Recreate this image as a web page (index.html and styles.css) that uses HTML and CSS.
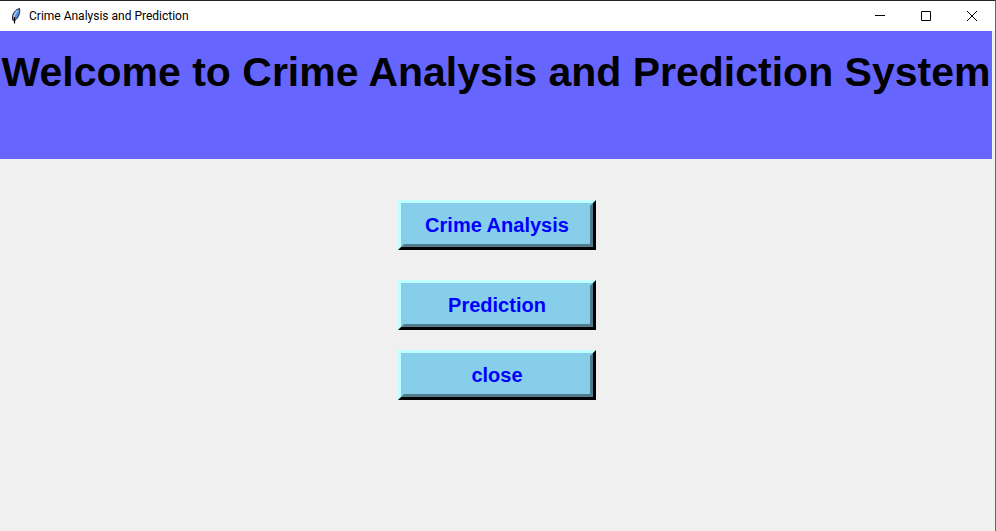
FILE: index.html
```html
<!DOCTYPE html>
<html lang="en">
<head>
<meta charset="utf-8">
<title>Crime Analysis and Prediction</title>
<link rel="stylesheet" href="styles.css">
</head>
<body>
<div class="window">
  <header class="titlebar">
    <svg class="feather" width="12" height="18" viewBox="0 0 12 18" aria-hidden="true">
      <path d="M9.500 1.500 C6 2.500 2.500 6 2.500 10 L2.500 13 L5 13.500 C8.500 10.500 10.500 6 9.500 1.500 Z" fill="#4a8be0" stroke="#20242c" stroke-width="1"/>
      <path d="M8 3.500 C5.500 5.500 4 8 4 11" fill="none" stroke="#a8d0fa" stroke-width="1.500"/>
      <path d="M4.500 10 L4.500 16.500" fill="none" stroke="#000" stroke-width="1.200"/>
    </svg>
    <span class="caption">Crime Analysis and Prediction</span>
    <div class="controls">
      <button class="control" type="button" aria-label="Minimize"><svg width="10" height="10" viewBox="0 0 10 10"><path d="M0 4.500H10" stroke="#000" fill="none"/></svg></button>
      <button class="control" type="button" aria-label="Maximize"><svg width="10" height="10" viewBox="0 0 10 10"><path d="M.5 .5H9.500V9.500H.5Z" stroke="#000" fill="none"/></svg></button>
      <button class="control" type="button" aria-label="Close"><svg width="10" height="10" viewBox="0 0 10 10"><path d="M0 0L10 10M10 0L0 10" stroke="#000" fill="none"/></svg></button>
    </div>
  </header>
  <main class="content">
    <h1 class="banner">Welcome to Crime Analysis and Prediction System</h1>
    <div class="actions">
      <button class="action action-first" type="button"><span class="face">Crime Analysis</span></button>
      <button class="action" type="button"><span class="face">Prediction</span></button>
      <button class="action" type="button"><span class="face">close</span></button>
    </div>
  </main>
</div>
</body>
</html>
```

FILE: styles.css
```css
* {
  box-sizing: border-box;
}

body {
  margin: 0;
  background: #f0f0f0;
  font-family: "Liberation Sans", Arial, sans-serif;
}

.window {
  min-height: 100vh;
  border-top: 1px solid #252525;
  border-right: 1px solid #666;
}

.titlebar {
  display: flex;
  align-items: center;
  height: 30px;
  padding-left: 10px;
  background: #fff;
}

.feather {
  flex: none;
  margin-right: 7px;
}

.caption {
  flex: 1;
  color: #000;
  font: 12px Roboto, "Open Sans", sans-serif;
  white-space: nowrap;
}

.controls {
  display: flex;
  height: 100%;
}

.control {
  display: flex;
  align-items: center;
  justify-content: center;
  width: 46px;
  padding: 0;
  border: 0;
  background: transparent;
}

.content {
  padding-right: 3px;
}

.banner {
  height: 128px;
  margin: 0;
  padding-top: 17px;
  background: #6666ff;
  color: #000;
  font-size: 41px;
  font-weight: bold;
  line-height: 48px;
  text-align: center;
  white-space: nowrap;
}

.actions {
  display: flex;
  flex-direction: column;
  align-items: center;
  gap: 20px;
  padding: 41px 0 20px 2px;
}

.action {
  display: flex;
  width: 198px;
  height: 50px;
  padding: 0;
  border: 3px solid;
  border-color: #c0ffff #000 #000 #c0ffff;
  background: #87ceeb;
  color: #00f;
  font: bold 20px/24px "Liberation Sans", Arial, sans-serif;
}

.action-first {
  margin-bottom: 10px;
}

.face {
  display: flex;
  flex: 1;
  align-self: stretch;
  align-items: center;
  justify-content: center;
  border: 3px solid;
  border-color: transparent #517c8d #517c8d transparent;
}
```
